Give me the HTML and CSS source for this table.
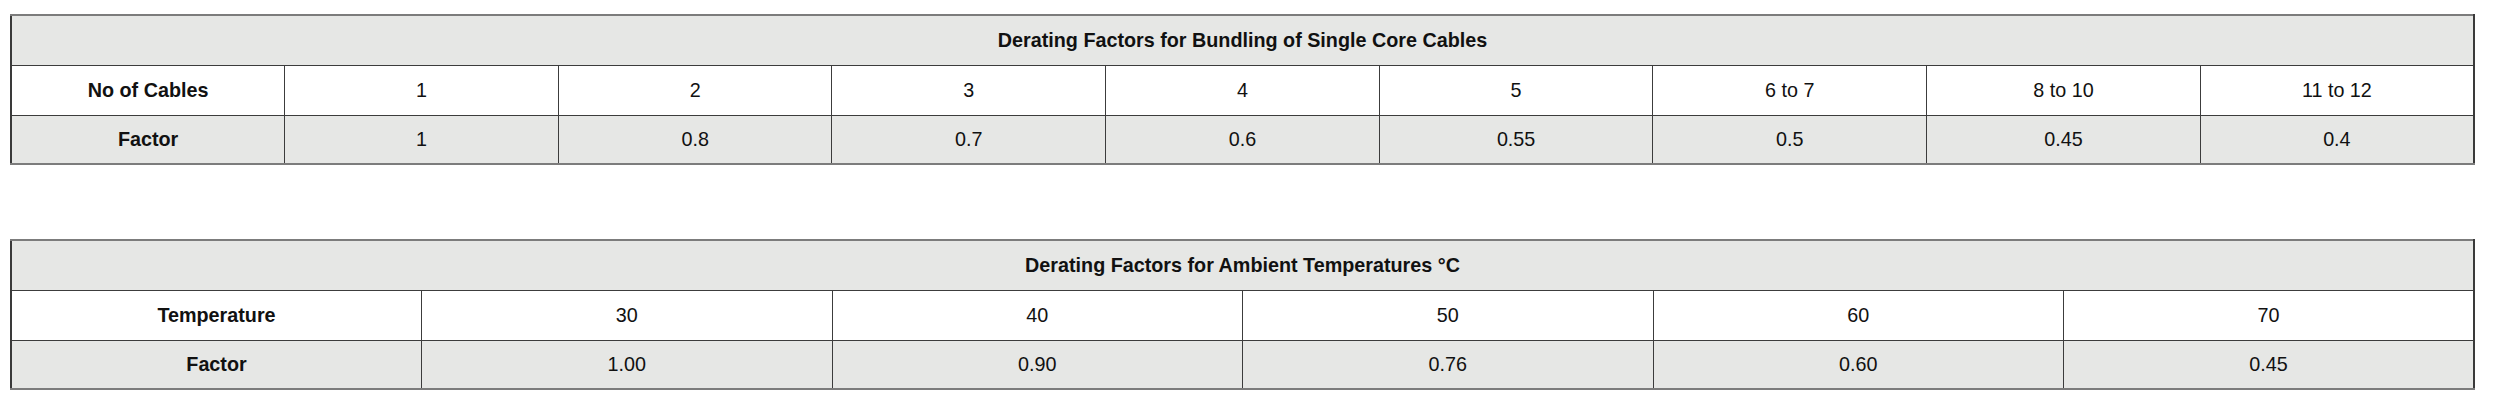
FILE: index.html
```html
<!DOCTYPE html>
<html lang="en">
<head>
<meta charset="utf-8">
<title>Derating Factors</title>
<link rel="stylesheet" href="styles.css">
</head>
<body>
<main class="page">
  <table class="derate derate-9">
    <tr class="row-head"><th colspan="9">Derating Factors for Bundling of Single Core Cables</th></tr>
    <tr class="row-light">
      <th>No of Cables</th><td>1</td><td>2</td><td>3</td><td>4</td><td>5</td><td>6 to 7</td><td>8 to 10</td><td>11 to 12</td>
    </tr>
    <tr class="row-shade">
      <th>Factor</th><td>1</td><td>0.8</td><td>0.7</td><td>0.6</td><td>0.55</td><td>0.5</td><td>0.45</td><td>0.4</td>
    </tr>
  </table>
  <table class="derate derate-6">
    <tr class="row-head"><th colspan="6">Derating Factors for Ambient Temperatures °C</th></tr>
    <tr class="row-light">
      <th>Temperature</th><td>30</td><td>40</td><td>50</td><td>60</td><td>70</td>
    </tr>
    <tr class="row-shade">
      <th>Factor</th><td>1.00</td><td>0.90</td><td>0.76</td><td>0.60</td><td>0.45</td>
    </tr>
  </table>
</main>
</body>
</html>
```
FILE: styles.css
```css
html, body {
  margin: 0;
  padding: 0;
  background: #ffffff;
}
.page {
  padding: 14px 0 0 10px;
  display: flex;
  flex-direction: column;
  gap: 74px;
  font-family: "Liberation Sans", Arial, sans-serif;
  font-size: 19.75px;
  color: #111111;
}
.derate {
  width: 2465px;
  border-collapse: collapse;
  table-layout: fixed;
  border-top: 2px solid #7c7c7c;
  border-bottom: 2px solid #7c7c7c;
  border-left: 2px solid #3a3a3a;
  border-right: 2px solid #3a3a3a;
}
.derate th,
.derate td {
  height: 50px;
  box-sizing: border-box;
  padding: 0;
  text-align: center;
  vertical-align: middle;
  border: 1px solid #3c3c3c;
  font-weight: normal;
}
.derate .row-shade th,
.derate .row-shade td {
  height: 49px;
}
.derate th {
  font-weight: bold;
}
.row-head th {
  background: #e6e7e5;
}
.row-light th,
.row-light td {
  background: #ffffff;
}
.row-shade th,
.row-shade td {
  background: #e6e7e5;
}
```
